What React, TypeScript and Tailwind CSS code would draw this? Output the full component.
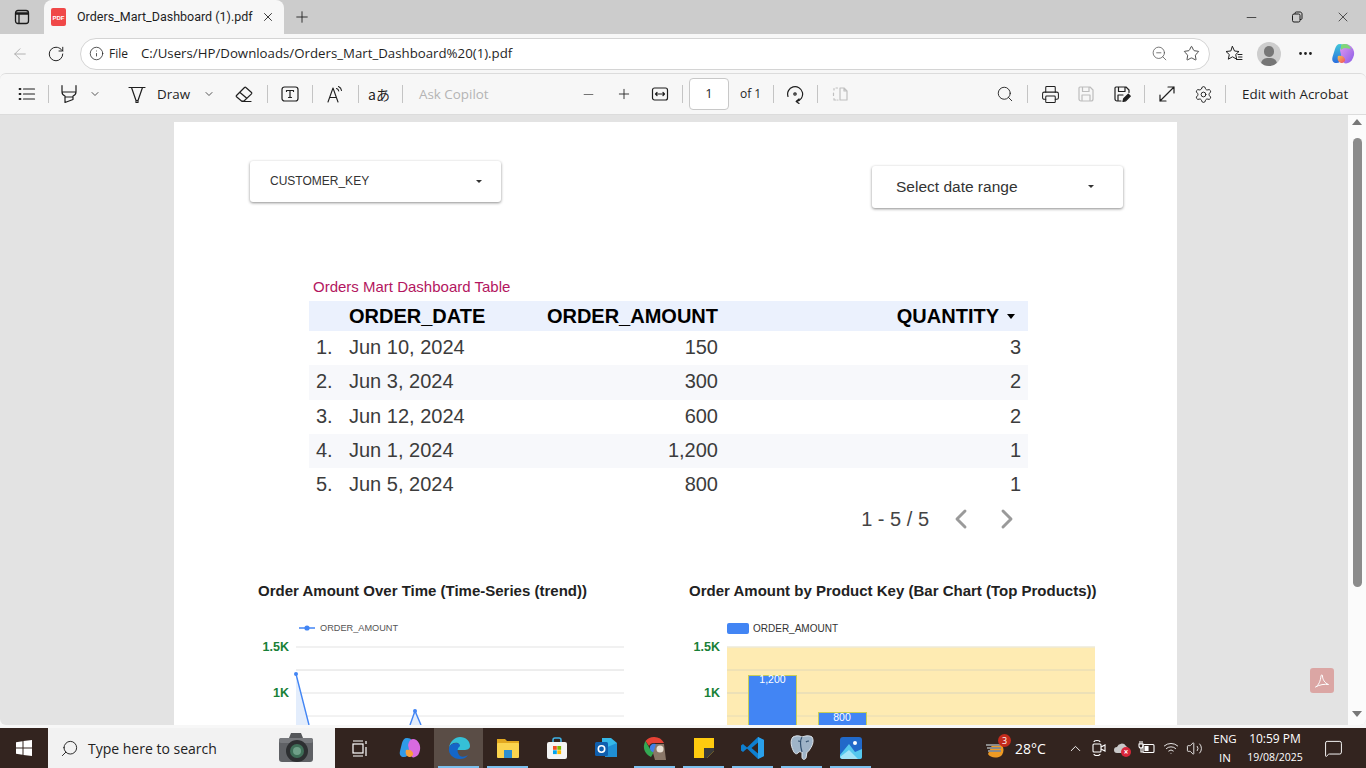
import React from 'react';
import {
  ArrowLeft, RotateCw, Info, ZoomOut, Star, MoreHorizontal, X, Plus, Minus, ChevronDown,
  Search, Printer, Settings, ChevronLeft, ChevronRight, ChevronUp, MessageSquare, Volume2, Wifi,
} from 'lucide-react';

const rows = [
  ['1.', 'Jun 10, 2024', '150', '3'],
  ['2.', 'Jun 3, 2024', '300', '2'],
  ['3.', 'Jun 12, 2024', '600', '2'],
  ['4.', 'Jun 1, 2024', '1,200', '1'],
  ['5.', 'Jun 5, 2024', '800', '1'],
];

const Sep = ({ className = '' }: { className?: string }) => <div className={`w-px h-[18px] bg-[#c4c4c4] shrink-0 ${className}`} />;

function Slot({ children, className = '' }: { children: React.ReactNode; className?: string }) {
  return <div className={`w-[36px] h-[36px] shrink-0 flex items-center justify-center ${className}`}>{children}</div>;
}

function Svg({ size = 20, children, className = '' }: { size?: number; children: React.ReactNode; className?: string }) {
  return (
    <svg width={size} height={size} viewBox="0 0 20 20" fill="none" stroke="currentColor" strokeWidth="1.2" strokeLinecap="round" strokeLinejoin="round" className={className}>
      {children}
    </svg>
  );
}

function PdfToolbar() {
  return (
    <div className="h-[42px] shrink-0 bg-[#f7f7f7] border-t border-b border-[#dcdcdc] flex items-center pl-[9px] text-[#1f1f1f] rounded-t-md text-[13.4px] font-['Open_Sans',sans-serif]">
      <Slot>
        <Svg><path d="M6.500 5h11M6.500 10h11M6.500 15h11" /><path d="M2.500 5h1M2.500 10h1M2.500 15h1" strokeWidth="1.800" /></Svg>
      </Slot>
      <Sep className="ml-[3px]" />
      <Slot className="ml-[2px]">
        <Svg><path d="M3 1.500V8h14V1.500M3 8c0 2 .7 3.200 3 4v6.500l8-3V12c2.300-.8 3-2 3-4M6 13h8" /></Svg>
      </Slot>
      <div className="w-[16px] flex justify-center"><ChevronDown size={12} className="text-[#555]" /></div>
      <Slot className="ml-[16px]">
        <Svg><path d="M2 3.500h16M4.500 3.500l4.500 13h2l4.500-13M9 16.500v2h2v-2" /></Svg>
      </Slot>
      <span className="ml-[2px] w-[32px]">Draw</span>
      <div className="ml-[12px] w-[16px] flex justify-center"><ChevronDown size={12} className="text-[#555]" /></div>
      <Slot className="ml-[9px]">
        <Svg><path d="M2.500 11.500L10.500 3.500a1 1 0 0 1 1.400 0l5.600 5a1 1 0 0 1 0 1.400L10 17H7.500l-5-4.200a.9.9 0 0 1 0-1.300zM6 8.500l6.500 5.500M8 17.500h9" /></Svg>
      </Slot>
      <Sep className="ml-[5px]" />
      <Slot className="ml-[4px]">
        <Svg><rect x="2" y="3" width="16" height="14" rx="2.500" /><path d="M6.500 6.500h7M6.500 6.500v1M13.500 6.500v1M10 6.500v7M8.500 13.500h3" /></Svg>
      </Slot>
      <Sep className="ml-[4px]" />
      <Slot className="ml-[4px]">
        <Svg><path d="M3 18L8 4l5 14M4.800 13.500h6.400M11.500 4.500c1.200.4 2 1.300 2.200 2.500M13.500 2.500c1.700.7 2.800 2 3 4" strokeWidth="1.100" /></Svg>
      </Slot>
      <Sep className="ml-[5px]" />
      <Slot className="ml-[2px] text-[14px] font-['Noto_Sans_CJK_JP','Noto_Sans',sans-serif]">aあ</Slot>
      <Sep className="ml-[5px]" />
      <span className="ml-[16px] w-[71px] text-[#b4b4b4] whitespace-nowrap">Ask Copilot</span>
      <Slot className="ml-[80px]"><Minus size={15} strokeWidth={1.300} className="text-[#555]" /></Slot>
      <Slot><Plus size={16} strokeWidth={1.300} /></Slot>
      <Slot>
        <Svg><rect x="2.500" y="4" width="15" height="12" rx="2" /><path d="M5.500 10h9M7 8.500L5.500 10 7 11.500M13 8.500l1.500 1.500-1.500 1.500" /></Svg>
      </Slot>
      <Sep className="ml-[4px]" />
      <div className="ml-[6px] w-[40px] h-[32px] bg-white border border-[#c8c8c8] rounded-sm flex items-center justify-center text-[13px]">1</div>
      <span className="ml-[11px] w-[20px] text-[12px] whitespace-nowrap">of 1</span>
      <Sep className="ml-[13px]" />
      <Slot className="ml-[3px]">
        <Svg><path d="M3 12.500A7.500 7.500 0 1 1 11.500 17.500M14 15l-2.800 2.500 2.800 2" /><circle cx="10" cy="10" r="1.200" /></Svg>
      </Slot>
      <Sep className="ml-[4px]" />
      <Slot className="ml-[4px] text-[#c0c0c0]">
        <Svg><path d="M10 4h4l3 3v9h-7zM14 4v3h3M7.500 4H6M4 4.500V6M3.500 9v2.500M4 14.500V16h2M8 16h-.5" /></Svg>
      </Slot>
      <Slot className="ml-[129px]"><Search size={18} strokeWidth={1.200} /></Slot>
      <Sep className="ml-[4px]" />
      <Slot className="ml-[4px]"><Printer size={19} strokeWidth={1.300} /></Slot>
      <Slot className="text-[#bdbdbd]">
        <Svg><path d="M4 3h10l3 3v9a2 2 0 0 1-2 2H5a2 2 0 0 1-2-2V4a1 1 0 0 1 1-1zM6.500 3v4.500H13V3M6 17v-6h8v6" /></Svg>
      </Slot>
      <Slot>
        <Svg><path d="M9 17H5a2 2 0 0 1-2-2V4a1 1 0 0 1 1-1h10l3 3v2.500M6.500 3v4.500H13V3M6 17v-6h5" /><path d="M11 17.500l.7-2.800 4.600-4.500 2 2-4.600 4.600z" fill="currentColor" /></Svg>
      </Slot>
      <Sep className="ml-[4px]" />
      <Slot className="ml-[4px]">
        <Svg><path d="M3 17L17 3M11 3h6v6M3 11v6h6" /></Svg>
      </Slot>
      <Slot><Settings size={19} strokeWidth={1.200} /></Slot>
      <Sep className="ml-[4px]" />
      <span className="ml-[16px] whitespace-nowrap">Edit with Acrobat</span>
    </div>
  );
}

function LineChart() {
  return (
    <svg width="400" height="120" viewBox="0 0 400 120" className="block font-['Liberation_Sans',sans-serif]">
      <line x1="46" x2="62" y1="14" y2="14" stroke="#4285f4" strokeWidth="1.500" />
      <circle cx="54" cy="14" r="2.600" fill="#4285f4" />
      <text x="67" y="17" fontSize="9.200" fill="#555">ORDER_AMOUNT</text>
      <text x="36" y="37" textAnchor="end" fontSize="12.500" fontWeight="bold" fill="#188038">1.5K</text>
      <text x="36" y="83" textAnchor="end" fontSize="12.500" fontWeight="bold" fill="#188038">1K</text>
      <line x1="43" x2="371" y1="33" y2="33" stroke="#ececec" strokeWidth="1.500" />
      <line x1="43" x2="371" y1="56" y2="56" stroke="#dcdcdc" />
      <line x1="43" x2="371" y1="79" y2="79" stroke="#ececec" strokeWidth="1.500" />
      <line x1="43" x2="371" y1="102" y2="102" stroke="#e6e6e6" />
      <path d="M43 60L56 111H43z" fill="#e3edfc" />
      <path d="M157 111L162 97L168 111z" fill="#e3edfc" />
      <path d="M43 60L56 111M157 111L162 97L168 111" stroke="#4285f4" strokeWidth="1.400" fill="none" />
      <circle cx="43" cy="60" r="2" fill="#4285f4" />
      <circle cx="162" cy="97" r="2" fill="#4285f4" />
    </svg>
  );
}

function BarChart() {
  return (
    <svg width="430" height="120" viewBox="0 0 430 120" className="block font-['Liberation_Sans',sans-serif]">
      <rect x="38" y="9" width="22" height="11" rx="2" fill="#4285f4" />
      <text x="64" y="18" fontSize="10" fill="#333">ORDER_AMOUNT</text>
      <text x="31" y="37" textAnchor="end" fontSize="12.500" fontWeight="bold" fill="#188038">1.5K</text>
      <text x="31" y="83" textAnchor="end" fontSize="12.500" fontWeight="bold" fill="#188038">1K</text>
      <rect x="38" y="33" width="368" height="90" fill="#feebb2" />
      <line x1="38" x2="406" y1="33" y2="33" stroke="#ecead8" strokeWidth="1.500" />
      <line x1="38" x2="406" y1="56" y2="56" stroke="#e0d8b8" />
      <line x1="38" x2="406" y1="79" y2="79" stroke="#e6dcb8" strokeWidth="1.500" />
      <line x1="38" x2="406" y1="102" y2="102" stroke="#e6dcb8" />
      <rect x="59.500" y="61.500" width="48" height="60" fill="#4285f4" stroke="#c9cf55" />
      <rect x="129.500" y="98.500" width="48" height="30" fill="#4285f4" stroke="#c9cf55" />
      <text x="83.500" y="69" textAnchor="middle" fontSize="10.500" fill="#fff">1,200</text>
      <text x="153" y="107" textAnchor="middle" fontSize="10.500" fill="#fff">800</text>
    </svg>
  );
}

function PdfPage() {
  return (
    <div className="w-[1003px] ml-[174px] mt-[7px] bg-white shrink-0 font-['Liberation_Sans',sans-serif]">
      <div className="flex items-start justify-between pl-[76px] pr-[54px] pt-[39px]">
        <div className="w-[251px] h-[41px] pb-[1px] bg-white rounded-[3px] shadow-[0_1px_3px_rgba(0,0,0,0.45)] flex items-center justify-between pl-[20px] pr-[19px] text-[12px] text-[#333]">
          CUSTOMER_KEY
          <span className="w-0 h-0 border-x-[3px] border-x-transparent border-t-[3px] border-t-[#333]" />
        </div>
        <div className="w-[251px] h-[42px] pb-[1px] mt-[5px] bg-white rounded-[3px] shadow-[0_1px_3px_rgba(0,0,0,0.45)] flex items-center justify-between pl-[24px] pr-[29px] text-[15.500px] text-[#333]">
          Select date range
          <span className="w-0 h-0 border-x-[3px] border-x-transparent border-t-[3px] border-t-[#333]" />
        </div>
      </div>

      <div className="ml-[135px] mt-[65px] w-[719px]">
        <div className="pl-[4px] h-[28px] flex items-center text-[15px] text-[#b31660]">Orders Mart Dashboard Table</div>
        <div className="h-[30px] pb-[2px] bg-[#ebf1fd] grid grid-cols-[40px_160px_209px_1fr] items-center text-[20px] font-bold text-black">
          <span />
          <span>ORDER_DATE</span>
          <span className="text-right whitespace-nowrap">ORDER_AMOUNT</span>
          <span className="flex items-center justify-end gap-[8px] pr-[13px]">
            QUANTITY
            <span className="w-0 h-0 border-x-[4px] border-x-transparent border-t-[5px] border-t-black" />
          </span>
        </div>
        {rows.map((r, i) => (
          <div key={r[0]} className={`h-[34.3px] pb-[2px] grid grid-cols-[40px_160px_209px_1fr] items-center text-[20px] text-[#3c3c3c] ${i % 2 === 1 ? 'bg-[#f7f8fb]' : 'bg-white'}`}>
            <span className="pl-[7px]">{r[0]}</span>
            <span>{r[1]}</span>
            <span className="text-right">{r[2]}</span>
            <span className="text-right pr-[7px]">{r[3]}</span>
          </div>
        ))}
        <div className="h-[34px] flex items-center justify-end text-[20px] text-[#444] pr-[5px]">
          1 - 5 / 5
          <ChevronLeft size={32} strokeWidth={2.200} className="ml-[16px] text-[#9a9a9a]" />
          <ChevronRight size={32} strokeWidth={2.200} className="ml-[14px] text-[#9a9a9a]" />
        </div>
      </div>

      <div className="flex mt-[46px]">
        <div className="ml-[84px] w-[431px]">
          <div className="text-[15px] font-bold text-[#222] h-[18px] leading-[18px] whitespace-nowrap">Order Amount Over Time (Time-Series (trend))</div>
          <div className="mt-[14px] -ml-[5px]"><LineChart /></div>
        </div>
        <div>
          <div className="text-[15px] font-bold text-[#222] h-[18px] leading-[18px] whitespace-nowrap">Order Amount by Product Key (Bar Chart (Top Products))</div>
          <div className="mt-[14px]"><BarChart /></div>
        </div>
      </div>
    </div>
  );
}

function Scrollbar() {
  return (
    <div className="absolute right-0 top-0 bottom-0 w-[18px] bg-[#fbfbfb] flex flex-col items-center">
      <span className="mt-[4px] w-0 h-0 border-x-[5px] border-x-transparent border-b-[6px] border-b-[#777]" />
      <div className="mt-[13px] w-[9px] h-[449px] rounded-full bg-[#8b8b8b]" />
      <span className="mt-auto mb-[8px] w-0 h-0 border-x-[5px] border-x-transparent border-t-[6px] border-t-[#777]" />
    </div>
  );
}

function TaskIcon({ children, active, on }: { children: React.ReactNode; active?: boolean; on?: boolean }) {
  return (
    <div className={`relative w-[49px] h-[40px] shrink-0 flex items-center justify-center ${active ? 'bg-[#5a4d46]' : ''}`}>
      {children}
      {on && <div className="absolute bottom-0 left-[4px] right-[4px] h-[2px] bg-[#7cc0ee]" />}
    </div>
  );
}

function Taskbar() {
  return (
    <div className="h-[40px] shrink-0 bg-[#33241f] flex items-center text-white font-['Open_Sans',sans-serif]">
      <div className="w-[48px] flex justify-center">
        <svg width="16" height="16" viewBox="0 0 16 16" fill="#fff"><path d="M0 2.200L6.500 1.300V7.500H0zM7.500 1.100L16 0V7.500H7.500zM0 8.500H6.500V14.700L0 13.800zM7.500 8.500H16V16L7.500 14.900z" /></svg>
      </div>
      <div className="w-[287px] h-[40px] bg-[#f2f2f2] flex items-center pl-[12px] text-[#222] text-[14px]">
        <Search size={19} strokeWidth={1.200} className="-scale-x-100" />
        <span className="ml-[9px]">Type here to search</span>
        <svg width="38" height="36" viewBox="0 0 38 36" className="ml-[auto] mr-[20px]">
          <path d="M12 8l2-5h10l2 5z" fill="#55575a" />
          <rect x="2" y="8" width="34" height="24" rx="3" fill="#5f6165" />
          <rect x="2" y="8" width="34" height="5" rx="2" fill="#77797d" />
          <circle cx="20" cy="21" r="11" fill="#2d2f31" />
          <circle cx="20" cy="21" r="7" fill="#3f6f58" />
          <circle cx="20" cy="21" r="4" fill="#6fa088" />
        </svg>
      </div>
      <div className="w-[49px] ml-[1px] flex justify-center">
        <svg width="17" height="17" viewBox="0 0 17 17" fill="none" stroke="#fff" strokeWidth="1.200"><path d="M1 1h10M1 16h10" /><rect x="1" y="4" width="10" height="9" /><path d="M14 1v3M14 7v9" /></svg>
      </div>
      <TaskIcon>
        <svg width="24" height="24" viewBox="0 0 24 24">
          <path d="M9 2c-3 0-4 2-5 5l-2 8c-1 4 1 6 4 6s4-2 5-5l2-8c1-3 1-6-4-6z" fill="#2f9be8" />
          <path d="M15 3c-2 0-3 1-4 3l-1 3 2 9c1 3 3 4 5 3 3-1 4-3 5-7 1-5-2-11-7-11z" fill="#d86ae0" />
          <path d="M8 14c3-1 6 0 7 3 .5 2-1 4-4 4-3-1-4-4-3-7z" fill="#f5a13c" />
        </svg>
      </TaskIcon>
      <TaskIcon active on>
        <svg width="24" height="24" viewBox="0 0 24 24">
          <path d="M2 12C3 5 8 1 13 1c6 0 10 4 10 9 0 3-3 4-6 4H9c0-4 4-6 2-7C7 6 3 8 2 12z" fill="#35c0d6" />
          <path d="M2 12c0-2 3-5 7-5s5 3 3 4c-2 2-2 6 1 9 2 1 5 1 8-1-2 3-5 4-8 4C6 23 1 18 2 12z" fill="#1466c8" />
        </svg>
      </TaskIcon>
      <TaskIcon on>
        <svg width="24" height="22" viewBox="0 0 24 22">
          <path d="M1 2h8l2 2h12v4H1z" fill="#e2a81f" />
          <rect x="1" y="6" width="22" height="15" rx="1" fill="#fbd44e" />
          <rect x="8" y="13" width="8" height="8" fill="#2e8fd0" />
        </svg>
      </TaskIcon>
      <TaskIcon>
        <svg width="24" height="24" viewBox="0 0 24 24">
          <path d="M8 6V4a2 2 0 0 1 2-2h4a2 2 0 0 1 2 2v2" fill="none" stroke="#3fb3e8" strokeWidth="1.500" />
          <rect x="2" y="6" width="20" height="17" rx="2" fill="#f4f4f4" />
          <rect x="8" y="10" width="3.800" height="3.800" fill="#f25022" />
          <rect x="12.300" y="10" width="3.800" height="3.800" fill="#7fba00" />
          <rect x="8" y="14.300" width="3.800" height="3.800" fill="#00a4ef" />
          <rect x="12.300" y="14.300" width="3.800" height="3.800" fill="#ffb900" />
        </svg>
      </TaskIcon>
      <TaskIcon>
        <svg width="24" height="24" viewBox="0 0 24 24">
          <path d="M8 2h9l6 5v13H8z" fill="#35b8e8" />
          <path d="M11 12l12-5v14H11z" fill="#1f8fd4" />
          <rect x="1" y="6" width="13" height="14" rx="1.500" fill="#0f5fae" />
          <circle cx="7.500" cy="13" r="3.200" fill="none" stroke="#fff" strokeWidth="1.600" />
        </svg>
      </TaskIcon>
      <TaskIcon on>
        <svg width="26" height="26" viewBox="0 0 26 26">
          <path d="M12 2a11 11 0 0 1 10 6H12a5 5 0 0 0-5 3L3.500 6A11 11 0 0 1 12 2z" fill="#e64235" />
          <path d="M3.500 6L8 14a5 5 0 0 0 4 3l-3 5A11 11 0 0 1 3.500 6z" fill="#34a853" />
          <circle cx="12" cy="13" r="4.200" fill="#3f7fe8" />
          <path d="M14 9h8l2 16H13l-2-7z" fill="#8a7768" />
          <circle cx="18" cy="14" r="3.500" fill="#e8e0d4" />
        </svg>
      </TaskIcon>
      <TaskIcon on>
        <svg width="24" height="24" viewBox="0 0 24 24">
          <path d="M2 2h20v13l-7 7H2z" fill="#ffcb0f" />
          <path d="M22 12v3l-7 7h-3v-10z" fill="#3a3a3a" />
        </svg>
      </TaskIcon>
      <TaskIcon on>
        <svg width="24" height="24" viewBox="0 0 24 24">
          <path d="M17 1l6 3v16l-6 3-11-10.500L2 16l-2-1.500V9.500L2 8l4 3.500z" fill="#0e7fd0" />
          <path d="M17 6.500L10.500 12l6.500 5.500z" fill="#33241f" />
          <path d="M17 1l6 3v16l-6 3z" fill="#2aa0ea" />
        </svg>
      </TaskIcon>
      <TaskIcon on>
        <svg width="26" height="28" viewBox="0 0 26 28">
          <path d="M4 3c4-2 7-1 9 0 3-1 7-2 10 0 2 3 1 8-2 12-1 2-2 3-3 3l-1 6c-1 2-4 2-4-1v-5c-3 0-3-1-4 1-2 2-4 0-5-3C2 12 1 6 4 3z" fill="#9fb4c8" stroke="#e0e6ec" strokeWidth="1" />
          <path d="M13 3c-2 3-2 8 0 15M9 7c1 0 2 0 3 1M20 7c-1 0-2 0-3 1" fill="none" stroke="#33506f" strokeWidth="1.200" />
        </svg>
      </TaskIcon>
      <TaskIcon on>
        <svg width="24" height="24" viewBox="0 0 24 24">
          <rect x="1" y="1" width="22" height="22" rx="3" fill="#2169c9" />
          <circle cx="16" cy="7" r="2" fill="#fff" />
          <path d="M1 19l9-11 6 8 7-3v8a2 2 0 0 1-2 2H3a2 2 0 0 1-2-2z" fill="#55c8ee" />
          <path d="M1 21l9-7 9 9H3z" fill="#a3e4f7" />
        </svg>
      </TaskIcon>

      <div className="ml-[109px] w-[24px] h-[24px] relative">
        <svg width="24" height="24" viewBox="0 0 24 24">
          <path d="M4 18c2 4 10 5 14 1 2-3 2-7 0-10H8z" fill="#ee9a23" />
          <path d="M2 9h14M3 12h14M4 15h13" stroke="#8a8a8a" strokeWidth="2" />
        </svg>
        <div className="absolute -top-[2px] right-[-3px] w-[13px] h-[13px] rounded-full bg-[#c42b1c] text-[9px] leading-[13px] text-center">3</div>
      </div>
      <span className="ml-[7px] text-[14px] w-[30px] whitespace-nowrap">28°C</span>
      <ChevronUp size={17} strokeWidth={1.300} className="ml-[22px]" />
      <svg width="16" height="18" viewBox="0 0 16 18" fill="none" stroke="#fff" strokeWidth="1.100" className="ml-[7px]"><path d="M3 3c0-2 6-2 6 0M3 15c0 2 6 2 6 0" /><rect x="2" y="5" width="8" height="8" rx="1" /><path d="M10 8l4-2v6l-4-2" /></svg>
      <div className="ml-[7px] w-[17px] h-[17px] relative">
        <svg width="15" height="12" viewBox="0 0 15 12" className="mt-[2px]"><path d="M3 11a3 3 0 0 1 0-6 5 5 0 0 1 9-1 4 4 0 0 1 0 7z" fill="#c8c8c8" /></svg>
        <div className="absolute bottom-0 right-0 w-[10px] h-[10px] rounded-full bg-[#d9263a] text-[8px] leading-[9px] text-center font-bold">×</div>
      </div>
      <svg width="17" height="16" viewBox="0 0 17 16" fill="none" stroke="#fff" strokeWidth="1.100" className="ml-[7px]"><rect x="5" y="4.500" width="11" height="8" rx="1" /><rect x="7" y="6.500" width="3" height="4" fill="#fff" /><path d="M2 1v3M4 1v3M1 4h4v2a2 2 0 0 1-4 0zM3 8v4h2" /></svg>
      <Wifi size={16} strokeWidth={1.300} className="ml-[8px]" />
      <Volume2 size={17} strokeWidth={1.200} className="ml-[7px]" />
      <div className="ml-[8px] w-[28px] text-[11.500px] leading-[19px] text-center">ENG<br />IN</div>
      <div className="ml-[6px] w-[60px] leading-[19px] text-center whitespace-nowrap">
        <div className="text-[12px]">10:59 PM</div>
        <div className="text-[10.500px]">19/08/2025</div>
      </div>
      <MessageSquare size={19} strokeWidth={1.200} className="ml-[19px]" />
    </div>
  );
}

export default function App() {
  return (
    <div className="w-[1366px] h-[768px] overflow-hidden flex flex-col bg-[#f7f7f7] font-['Open_Sans',sans-serif] text-[#1f1f1f]">
      {/* tab strip */}
      <div className="h-[34px] shrink-0 bg-[#cccccc] flex items-end">
        <div className="w-[44px] h-[34px] flex items-center justify-center">
          <svg width="16" height="16" viewBox="0 0 16 16" fill="none" stroke="#1a1a1a" strokeWidth="1.300"><rect x="1.500" y="1.500" width="13" height="13" rx="2.500" /><path d="M1.500 4.500h13" strokeWidth="2.500" /><path d="M5 4v10" /></svg>
        </div>
        <div className="w-[240px] h-[34px] bg-[#f7f7f7] rounded-t-lg flex items-center pl-[7px] pr-[9px] text-[12.500px] font-['Roboto',sans-serif]">
          <div className="w-[15px] h-[18px] bg-[#f04848] rounded-[2px] text-white text-[6px] font-bold flex items-end justify-center pb-[3px] font-['Liberation_Sans',sans-serif]">PDF</div>
          <span className="ml-[11px] whitespace-nowrap">Orders_Mart_Dashboard (1).pdf</span>
          <X size={14} strokeWidth={1.500} className="ml-auto" />
        </div>
        <div className="w-[36px] h-[34px] flex items-center justify-center"><Plus size={18} strokeWidth={1.200} /></div>
        <div className="ml-auto flex items-center h-[34px]">
          <div className="w-[45px] flex justify-center"><Minus size={15} strokeWidth={1.200} /></div>
          <div className="w-[46px] flex justify-center"><svg width="12" height="12" viewBox="0 0 12 12" fill="none" stroke="#1a1a1a"><rect x="1.500" y="3" width="7.500" height="8" rx="1.500" /><path d="M4 3V2.300C4 1.500 4.500 1 5.300 1H9c1.200 0 2 .8 2 2v4.500c0 .5-.5 1-1 1H9" /></svg></div>
          <div className="w-[46px] flex justify-center"><X size={16} strokeWidth={1.100} /></div>
        </div>
      </div>

      {/* address row */}
      <div className="h-[39px] shrink-0 flex items-center">
        <div className="w-[39px] flex justify-center"><ArrowLeft size={18} strokeWidth={1.200} className="text-[#a9a9a9]" /></div>
        <div className="w-[34px] flex justify-center"><RotateCw size={18} strokeWidth={1.300} /></div>
        <div className="ml-[7px] w-[1130px] h-[32px] bg-white rounded-full border border-[#d4d4d4] flex items-center pl-[8px] pr-[9px] text-[13.250px]">
          <Info size={15} strokeWidth={1.200} />
          <span className="ml-[5px] text-[12px]">File</span>
          <span className="ml-[13px] whitespace-nowrap">C:/Users/HP/Downloads/Orders_Mart_Dashboard%20(1).pdf</span>
          <ZoomOut size={17} strokeWidth={1.100} className="ml-auto text-[#555]" />
          <Star size={17} strokeWidth={1.100} className="ml-[15px]" />
        </div>
        <Svg className="ml-[14px]"><path d="M8.500 2.500l2 4.500 4.500.5-3.300 3 1 4.700-4.200-2.400-4.200 2.400 1-4.700L2 7.500 6.500 7zM14 10.500h4M14.500 13h3.500M12.500 15.500H18" strokeWidth="1" /></Svg>
        <div className="ml-[13px] w-[24px] h-[24px] rounded-full bg-[#cdcdcd] relative overflow-hidden flex justify-center">
          <div className="absolute top-[4px] w-[10px] h-[11px] rounded-full bg-[#767676]" />
          <div className="absolute top-[16px] w-[16px] h-[12px] rounded-full bg-[#767676]" />
        </div>
        <MoreHorizontal size={17} className="ml-[16px]" />
        <svg width="24" height="24" viewBox="0 0 24 24" className="ml-[17px]">
          <defs>
            <linearGradient id="cpA" x1="0" y1="0" x2="0" y2="1"><stop offset="0" stopColor="#43c7d8" /><stop offset="1" stopColor="#2a6fe0" /></linearGradient>
            <linearGradient id="cpB" x1="0" y1="0" x2="1" y2="1"><stop offset="0" stopColor="#e39af0" /><stop offset="1" stopColor="#8a5ce6" /></linearGradient>
            <linearGradient id="cpC" x1="0" y1="0" x2="1" y2="1"><stop offset="0" stopColor="#f8c24a" /><stop offset="1" stopColor="#ef4c6a" /></linearGradient>
          </defs>
          <path d="M9 2C6 2 5 4 4 7L1.500 15c-1 4 1 6 4 6 3 0 4-2 5-5l2-8c1-3 1-6-3.500-6z" fill="url(#cpA)" />
          <path d="M14 2c-2 0-3 1-4 3l-1 3 2 10c1 3 3 4 6 3 3-1 5-4 6-8 1-5-3-11-9-11z" fill="url(#cpB)" />
          <path d="M7 14c3-1 6 0 7 3 .5 2-1 4-4 4-3-1-4-4-3-7z" fill="url(#cpC)" />
          <path d="M10 3c1-1 2-1 4-1 3 0 5 2 6 5l-6-1c-2 0-3 1-4 2z" fill="#7fd67a" />
        </svg>
      </div>

      <PdfToolbar />

      {/* document viewport */}
      <div className="relative h-[610px] shrink-0 bg-[#e3e3e3] overflow-hidden rounded-b-md flex flex-col">
        <PdfPage />
        <Scrollbar />
        <div className="absolute left-[1310px] top-[553px] w-[24px] h-[25px] rounded-[3px] bg-[#dba6a4] flex items-center justify-center">
          <svg width="16" height="16" viewBox="0 0 16 16" fill="none" stroke="#fff" strokeWidth="1"><path d="M1.500 14c3-1.500 5-6 5.500-11 .2-1.500 1.500-1.500 1.500 0 0 3 2 7 6 8.500-4-.7-9 .2-13 2.500z" /></svg>
        </div>
      </div>
      <div className="h-[3px] shrink-0 bg-[#f7f7f7]" />

      <Taskbar />
    </div>
  );
}
